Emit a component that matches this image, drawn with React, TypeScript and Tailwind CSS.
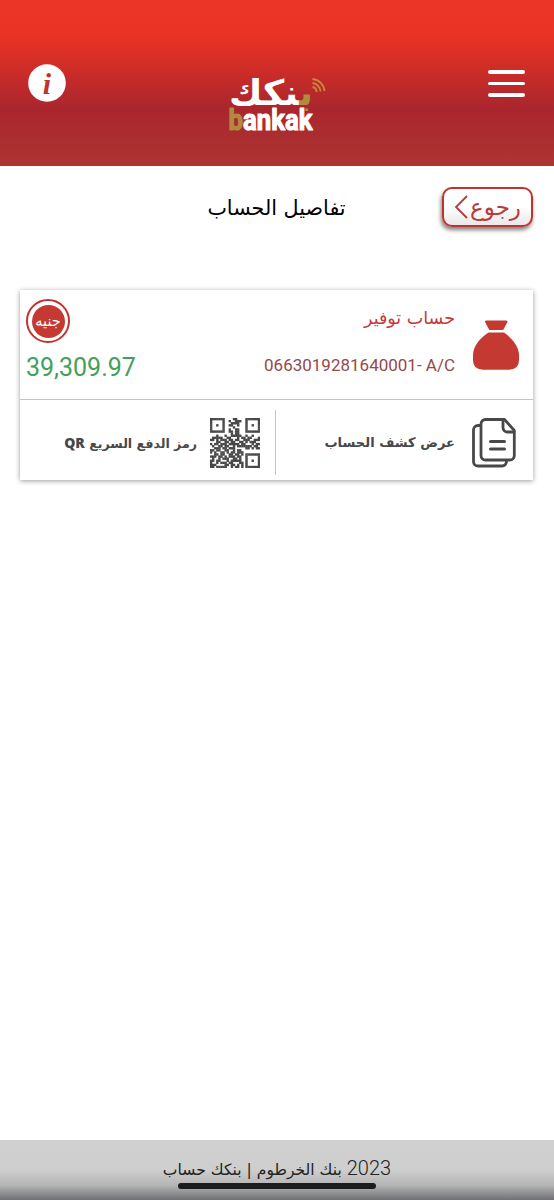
import React from 'react';

const qrRows = [
  '111111100001100001111111',
  '100000100100111001000001',
  '100000100011110001000001',
  '100100100110010001001001',
  '100000100001000001000001',
  '100000100100110001000001',
  '111111100110110001111111',
  '000000000010110000000000',
  '000100010011111001001000',
  '011111001100010110110001',
  '110101110110110011100111',
  '000110011011001101011100',
  '101101110111110110001011',
  '010011011001011111110110',
  '001110110111000001101011',
  '110110011001011000000000',
  '101001101011011100000000',
  '001101100110110101111111',
  '111011010111011001000001',
  '010010111001101001000001',
  '110110001011111001001001',
  '100101110110001101000001',
  '111000011011010101000001',
  '110111110010110101111111',
];

function InfoIcon() {
  return (
    <svg width="38" height="38" viewBox="0 0 38 38">
      <circle cx="19" cy="19" r="18.8" fill="#fff" />
      <text x="19" y="29.5" textAnchor="middle" fontFamily="Liberation Serif, serif" fontSize="30" fontWeight="700" fontStyle="italic" fill="#c0322e">i</text>
    </svg>
  );
}

function Logo() {
  return (
    <svg width="100" height="58" viewBox="0 0 100 58" overflow="visible" fontFamily="DejaVu Sans, sans-serif" fontWeight="700">
      <text transform="translate(85 29) scale(1 1.22)" direction="rtl" fontSize="29" fill="#fff" textLength="84" lengthAdjust="spacingAndGlyphs">
        <tspan fill="#b08a3e">ب</tspan>نكك
      </text>
      <text x="0.5" y="54" fontFamily="Roboto, sans-serif" fontSize="29" fill="#fff" stroke="#fff" strokeWidth="1.1" strokeLinejoin="round" textLength="84" lengthAdjust="spacingAndGlyphs">
        <tspan fill="#b08a3e" stroke="#b08a3e">b</tspan>ankak
      </text>
      <g fill="none" stroke="#c58a3c" strokeWidth="1.8">
        <path d="M84.500 11a5 5 0 0 1 4 5" />
        <path d="M84.500 7a9 9 0 0 1 8 8.500" />
        <path d="M84.500 3a13 13 0 0 1 12 12" />
      </g>
    </svg>
  );
}

function MoneyBag() {
  return (
    <svg width="46" height="50" viewBox="0 0 46 50" fill="#c43a32">
      <path d="M13.500 0.500h19.500q2.200 0 1.200 2l-4 7.500H16.300L12.300 2.500q-1-2 1.200-2z" />
      <path d="M15.500 12.500h15.500C38 17.500 46 25.500 46 35v5q0 9.700-10 9.700H10Q0 49.700 0 40v-5c0-9.500 8-17.500 15.500-22.500z" />
    </svg>
  );
}

function Documents() {
  return (
    <svg width="44" height="50" viewBox="0 0 44 50" fill="none" stroke="#484848" strokeWidth="2.800" strokeLinecap="round" strokeLinejoin="round">
      <path d="M8.500 7.500H6a4.500 4.500 0 0 0-4.500 4.500v31.500A4.500 4.500 0 0 0 6 48h24a4.500 4.500 0 0 0 4.500-5" />
      <path d="M13.500 1.500h19l9.800 11v25a4.500 4.500 0 0 1-4.500 4.500H13.500A4.500 4.500 0 0 1 9 37.500V6a4.500 4.500 0 0 1 4.500-4.500z" />
      <path d="M31 2v7.500a4.500 4.500 0 0 0 4.500 4.500H42" />
      <path d="M18.500 23.500h14M18.500 31h14" strokeWidth="3" />
    </svg>
  );
}

function QrCode() {
  return (
    <svg width="50" height="50" viewBox="0 0 24 24" fill="#484848">
      {qrRows.map((row, y) =>
        row.split('').map((cell, x) => cell === '1' && <rect key={`${x}-${y}`} x={x - 0.050} y={y - 0.050} width="1.150" height="1.150" />)
      )}
    </svg>
  );
}

function Header() {
  return (
    <header className="h-[166px] px-7 flex justify-between items-start bg-[linear-gradient(to_bottom,#ea3527_0px,#ea3325_34px,#cb2c28_73px,#aa262e_108px,#ad3431_166px)]">
      <button className="mt-16"><InfoIcon /></button>
      <div className="mt-[76px] ml-[1px]"><Logo /></div>
      <button className="mt-[70px] w-[37px] flex flex-col gap-2 mr-[1px]">
        <span className="h-[3.500px] w-full rounded-full bg-white" />
        <span className="h-[3.500px] w-full rounded-full bg-white" />
        <span className="h-[3.500px] w-full rounded-full bg-white" />
      </button>
    </header>
  );
}

export default function App() {
  return (
    <div className="w-[554px] h-[1200px] flex flex-col bg-white overflow-hidden font-['DejaVu_Sans',sans-serif]">
      <Header />
      <main className="flex-1 pl-5 pr-[21px]">
        <div dir="rtl" className="grid grid-cols-[1fr_auto_1fr] pt-[21px] h-[124px] items-start">
          <button className="w-[91px] h-10 flex items-center justify-center gap-0.5 rounded-[10px] border-2 border-[#c0322e] bg-linear-to-b from-white from-50% to-[#e8e8e8] text-[#b83b36] shadow-[-1px_3px_4px_rgba(0,0,0,0.5)]">
            <span className="text-[23px] leading-8 whitespace-nowrap">رجوع</span>
            <svg width="14" height="24" viewBox="0 0 14 24" fill="none" stroke="currentColor" strokeWidth="1.800"><path d="M13 1L2 12l11 11" /></svg>
          </button>
          <h1 className="text-[20.700px] leading-[42px] text-black whitespace-nowrap">تفاصيل الحساب</h1>
        </div>
        <section dir="rtl" className="h-[190px] bg-white shadow-[0_1px_5px_rgba(0,0,0,0.4)]">
          <div className="h-[110px] flex border-b border-[#c4c4c4] pr-[14px] pl-[6px]">
            <div className="pt-[30px]"><MoneyBag /></div>
            <div className="flex-1 pr-[18px] pt-3">
              <div className="text-[17.500px] leading-8 text-[#c43a3a]">حساب توفير</div>
              <div dir="ltr" className="mt-[15px] text-right font-[Roboto] text-[17px] leading-8 text-[#95494a] whitespace-nowrap">0663019281640001- A/C</div>
            </div>
            <div className="flex flex-col items-end pt-[9px]">
              <div className="size-11 rounded-full border-[2.500px] border-[#c0322e] flex items-center justify-center">
                <div className="size-[33px] rounded-full bg-[#c43a32] flex items-center justify-center text-[14.500px] leading-4 text-white">جنيه</div>
              </div>
              <div dir="ltr" className="mt-[9px] font-[Roboto] text-[25px] leading-8 text-[#43a05a]">39,309.97</div>
            </div>
          </div>
          <div className="h-20 flex items-center text-[#484848] text-[13.100px] font-bold">
            <div className="w-[257px] flex items-center pr-[17px] gap-[17px] pt-1.5">
              <Documents />
              <span className="whitespace-nowrap">عرض كشف الحساب</span>
            </div>
            <div className="h-[65px] w-px mt-1 bg-[#c4c4c4]" />
            <div className="flex-1 flex items-center pr-[15px] gap-[13px] pt-1.5">
              <QrCode />
              <span className="whitespace-nowrap text-[12.600px] leading-5">رمز الدفع السريع <b className="font-['Noto_Sans'] text-[14px]">QR</b></span>
            </div>
          </div>
        </section>
      </main>
      <footer className="h-[60px] flex flex-col items-center bg-[linear-gradient(to_bottom,#d0d0d0_0%,#cecece_50%,#b5b5b5_75%,#707174_100%)]">
        <p dir="rtl" className="mt-[13px] text-[15.600px] leading-[30px] h-[30px] text-[#222] whitespace-nowrap"><span className="font-[Roboto] font-light text-[20px]">2023</span> بنك الخرطوم | بنكك حساب</p>
        <div className="w-[198px] h-[6px] rounded-full bg-[#1b1c1d]" />
      </footer>
    </div>
  );
}
